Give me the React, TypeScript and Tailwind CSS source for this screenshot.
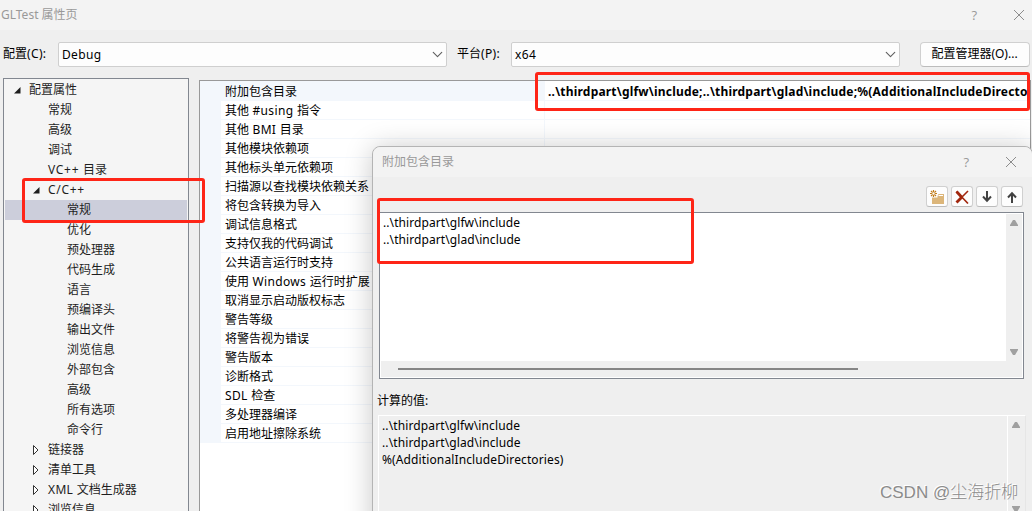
import { ChevronDown } from "lucide-react";

type TreeItem = { label: string; level: number; state?: "open" | "closed"; selected?: boolean };

const tree: TreeItem[] = [
  { label: "配置属性", level: 0, state: "open" },
  { label: "常规", level: 1 },
  { label: "高级", level: 1 },
  { label: "调试", level: 1 },
  { label: "VC++ 目录", level: 1 },
  { label: "C/C++", level: 1, state: "open" },
  { label: "常规", level: 2, selected: true },
  { label: "优化", level: 2 },
  { label: "预处理器", level: 2 },
  { label: "代码生成", level: 2 },
  { label: "语言", level: 2 },
  { label: "预编译头", level: 2 },
  { label: "输出文件", level: 2 },
  { label: "浏览信息", level: 2 },
  { label: "外部包含", level: 2 },
  { label: "高级", level: 2 },
  { label: "所有选项", level: 2 },
  { label: "命令行", level: 2 },
  { label: "链接器", level: 1, state: "closed" },
  { label: "清单工具", level: 1, state: "closed" },
  { label: "XML 文档生成器", level: 1, state: "closed" },
  { label: "浏览信息", level: 1, state: "closed" },
];

const properties = [
  "附加包含目录",
  "其他 #using 指令",
  "其他 BMI 目录",
  "其他模块依赖项",
  "其他标头单元依赖项",
  "扫描源以查找模块依赖关系",
  "将包含转换为导入",
  "调试信息格式",
  "支持仅我的代码调试",
  "公共语言运行时支持",
  "使用 Windows 运行时扩展",
  "取消显示启动版权标志",
  "警告等级",
  "将警告视为错误",
  "警告版本",
  "诊断格式",
  "SDL 检查",
  "多处理器编译",
  "启用地址擦除系统",
];

const indent = ["w-6", "w-[43px]", "w-[62px]"];

// Latin runs are a little wider than the 12px CJK glyphs around them
function Txt({ children }: { children: string }) {
  return (
    <span>
      {children.split(/([\x20-\x7e]+)/).map((part, i) =>
        i % 2 ? (
          <span key={i} className={part.includes("++") ? "tracking-[0.7px]" : "tracking-[0.35px]"}>
            {part}
          </span>
        ) : (
          part
        )
      )}
    </span>
  );
}

function CloseIcon() {
  return (
    <svg width="12" height="12" viewBox="0 0 12 12" className="text-[#8c8c8c]">
      <path d="M1 1l10 10M11 1L1 11" stroke="currentColor" strokeWidth="1" fill="none" />
    </svg>
  );
}

function Triangle({ down = false }: { down?: boolean }) {
  return (
    <svg width="10" height="8" viewBox="0 0 10 8" className="text-[#a0a0a0]">
      <path
        d={down ? "M1 1h8v1L6 7H4L1 2z" : "M1 7h8V6L6 1H4L1 6z"}
        fill="currentColor"
      />
    </svg>
  );
}

function Arrow({ down = false }: { down?: boolean }) {
  return (
    <svg width="10" height="12" viewBox="0 0 10 12" fill="none" stroke="#424242" strokeWidth="2">
      <path d={down ? "M5 0v10M1 5.500l4 4.200 4-4.200" : "M5 12V2M1 6.500l4-4.200 4 4.200"} />
    </svg>
  );
}

function Expander({ state }: { state: "open" | "closed" }) {
  return state === "open" ? (
    <svg width="8" height="10" viewBox="0 0 8 10" className="-mr-px">
      <path d="M7.500 2v6.500H1z" fill="#1e1e1e" />
    </svg>
  ) : (
    <svg width="8" height="12" viewBox="0 0 8 12" className="-mr-px">
      <path d="M1.500 1.500v9L6 6z" fill="#fff" stroke="#333" strokeWidth="1" />
    </svg>
  );
}

function Combo({ value }: { value: string }) {
  return (
    <div className="flex h-[25px] w-[389px] items-center justify-between rounded-[2px] border border-[#cfcfcf] bg-[#fdfdfd] pt-px pl-[3px]">
      <Txt>{value}</Txt>
      <ChevronDown size={17} strokeWidth={1.6} className="text-[#606060]" />
    </div>
  );
}

function ToolButton({ children }: { children: React.ReactNode }) {
  return (
    <div className="flex h-[21px] w-[22px] items-center justify-center rounded-[3px] border border-[#d0d0d0] border-b-[#bcbcbc] bg-[#fdfdfd]">
      {children}
    </div>
  );
}

function Dialog() {
  return (
    <div className="absolute top-[146px] left-[372px] h-[400px] w-[661px] rounded-t-lg border border-[#b4b4b4] bg-[#efefef] shadow-[0_2px_28px_rgba(0,0,0,0.22)]">
      <div className="flex h-[30px] items-center rounded-t-lg bg-[#f3f3f3] pr-[15px] pl-[9px] text-[#999]">
        <span className="grow pb-px">附加包含目录</span>
        <span className="mr-[36px] font-['Open_Sans'] text-[13px]">?</span>
        <CloseIcon />
      </div>
      <div className="flex h-[35px] items-end justify-end gap-[3px] pr-[9px] pb-[5px]">
        <ToolButton>
          <svg width="16" height="16" viewBox="0 0 16 16">
            <path d="M3 7.500h5l1.500-2.500H15v10H3z" fill="#dcb67a" />
            <path d="M9.500 6.500H14" stroke="#fff" />
            <rect x="0" y="0" width="8.500" height="8.500" fill="#fdfdfd" />
            <path
              d="M4.500 1v2M4.500 6v2M1 4.500h2M6 4.500h2M2 2l1.200 1.200M5.800 5.800L7 7M7 2L5.800 3.200M3.200 5.800L2 7"
              stroke="#c27d1a"
              strokeWidth="1.200"
            />
            <circle cx="4.500" cy="4.500" r="1.500" fill="none" stroke="#c27d1a" strokeWidth=".8" />
          </svg>
        </ToolButton>
        <ToolButton>
          <svg width="14" height="14" viewBox="0 0 14 14" fill="none" stroke="#a1260d">
            <path d="M1.500 1.500L13 13.500" strokeWidth="1.600" />
            <path d="M1.500 1.500L7 7.500" strokeWidth="2.800" />
            <path d="M13 1L6.500 7.500" strokeWidth="1.600" />
            <path d="M7 7L1.500 12.500" strokeWidth="2.800" />
          </svg>
        </ToolButton>
        <ToolButton>
          <Arrow down />
        </ToolButton>
        <ToolButton>
          <Arrow />
        </ToolButton>
      </div>

      {/* Editable list */}
      <div className="ml-[6px] flex h-[167px] w-[645px] flex-col border border-[#828790] bg-white pr-px pb-px pl-px">
        <div className="flex grow">
          <div className="grow pt-px pl-[2px] leading-[17px] tracking-[0.08px] text-black">
            <p>..\thirdpart\glfw\include</p>
            <p>..\thirdpart\glad\include</p>
          </div>
          <div className="mt-px flex w-4 flex-col items-center justify-between bg-[#efefef] pt-[5px] pb-[5px]">
            <Triangle />
            <Triangle down />
          </div>
        </div>
        <div className="flex h-4 items-center bg-[#efefef] pl-[17px]">
          <div className="h-[2px] w-[460px] bg-[#858585]"></div>
        </div>
      </div>

      <p className="mt-[12px] ml-1 h-[24px] leading-[20px] text-black">
        <Txt>计算的值:</Txt>
      </p>

      {/* Evaluated value */}
      <div className="ml-[5px] flex h-[120px] w-[648px] border border-[#e6e6e6] border-t-white border-l-white">
        <div className="grow border-r border-white pt-px pl-[3px] leading-[17px] tracking-[0.12px] text-black">
          <p>..\thirdpart\glfw\include</p>
          <p>..\thirdpart\glad\include</p>
          <p>%(AdditionalIncludeDirectories)</p>
        </div>
        <div className="flex h-[97px] w-[17px] flex-col items-center justify-between pt-[5px] pr-px">
          <Triangle />
          <Triangle down />
        </div>
      </div>
    </div>
  );
}

export default function App() {
  return (
    <div className="relative flex h-[511px] w-[1032px] flex-col overflow-hidden bg-[#efefef] font-['Noto_Sans','Noto_Sans_CJK_SC',sans-serif] text-[12px] leading-[18px] whitespace-nowrap text-black">
      <header className="flex h-[30px] shrink-0 items-center bg-[#f3f3f3] pr-[7px] text-[#999]">
        <span className="grow pl-px">GLTest 属性页</span>
        <span className="mr-[36px] font-['Open_Sans'] text-[13px]">?</span>
        <CloseIcon />
      </header>

      <div className="flex h-12 shrink-0 items-center pl-[3px]">
        <span className="w-[55px]"><Txt>配置(C):</Txt></span>
        <Combo value="Debug" />
        <span className="w-[64px] pl-[10px]"><Txt>平台(P):</Txt></span>
        <Combo value="x64" />
        <button className="ml-5 h-[25px] w-[110px] rounded border border-[#d0d0d0] border-b-[#bcbcbc] bg-[#fdfdfd] pr-px">
          配置管理器(O)...
        </button>
      </div>

      <main className="flex min-h-0 grow">
        <nav className="ml-[3px] w-[186px] shrink-0 overflow-hidden border-x border-t border-[#828790] bg-[#f5f5f5] px-px pt-px text-[#1e1e1e]">
          {tree.map((item, i) => (
            <div key={i} className={`flex h-5 items-center ${item.selected ? "bg-[#cccedb]" : ""}`}>
              <span className={`flex shrink-0 justify-end pr-[9px] ${indent[item.level]}`}>
                {item.state && <Expander state={item.state} />}
              </span>
              <Txt>{item.label}</Txt>
            </div>
          ))}
        </nav>

        <section className="mt-[2px] ml-[10px] w-[832px] shrink-0 border-x border-t border-[#999] bg-white">
          {properties.map((name, i) => (
            <div key={name} className={`flex bg-[#f3f7fc] ${i === 0 ? "h-5" : "h-[19px]"}`}>
              <div className="w-[21px] shrink-0"></div>
              <div
                className={`w-[323px] shrink-0 border-b border-[#f3f7fc] pl-1 leading-[20px] ${i === 0 ? "pt-px" : "bg-white"}`}
              >
                <Txt>{name}</Txt>
              </div>
              <div className="grow overflow-hidden border-b border-l border-[#f3f7fc] bg-white">
                {i === 0 && (
                  <p className="pt-px pl-[3px] leading-[20px] font-bold tracking-[0.2px]">
                    {"..\\thirdpart\\glfw\\include;..\\thirdpart\\glad\\include;%(AdditionalIncludeDirecto"}
                  </p>
                )}
              </div>
            </div>
          ))}
        </section>
      </main>

      <Dialog />

      {/* Highlight frames */}
      <div className="absolute top-[178px] left-[22px] h-[45px] w-[183px] rounded-[3px] border-[3px] border-[#fe2517]"></div>
      <div className="absolute top-[72px] left-[535px] h-[39px] w-[495px] rounded-[3px] border-[3px] border-[#fe2517]"></div>
      <div className="absolute top-[198px] left-[377px] h-[66px] w-[317px] rounded-[3px] border-[3px] border-[#fe2517]"></div>

      <p className="absolute top-[482px] left-[880px] font-['Liberation_Sans','Noto_Sans_CJK_SC',sans-serif] text-[17px] leading-[22px] font-light text-[#8b8b8b] [text-shadow:-1px_-1px_0_#fff]">
        CSDN @尘海折柳
      </p>
    </div>
  );
}
